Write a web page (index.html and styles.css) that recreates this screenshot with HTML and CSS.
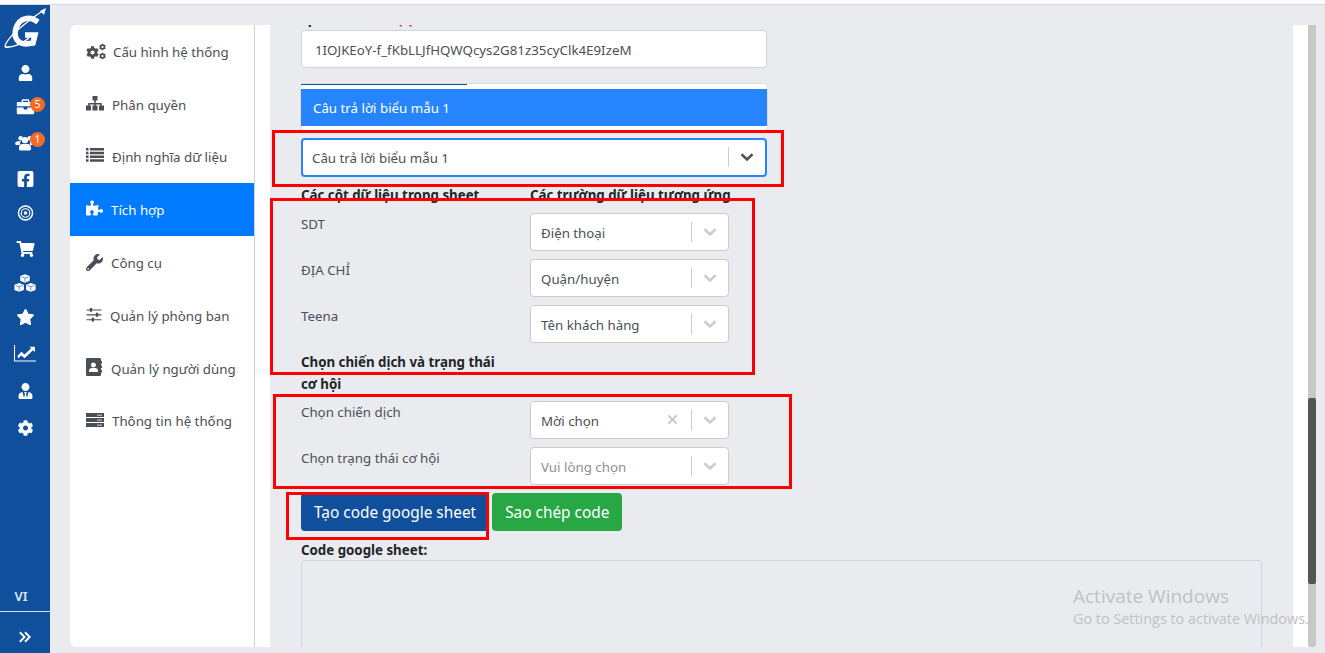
FILE: index.html
```html
<!DOCTYPE html>
<html lang="vi">
<head>
<meta charset="utf-8">
<title>Tích hợp</title>
<link rel="stylesheet" href="styles.css">
</head>
<body>
<svg class="defs" width="0" height="0" aria-hidden="true">
  <symbol id="i-cog" viewBox="0 0 512 512"><path d="M487.4 315.7l-42.6-24.6c4.3-23.2 4.3-47 0-70.2l42.6-24.6c4.9-2.8 7.1-8.6 5.5-14-11.1-35.6-30-67.8-54.7-94.6-3.8-4.1-10-5.1-14.8-2.3L380.8 110c-17.9-15.4-38.5-27.3-60.8-35.1V25.8c0-5.6-3.9-10.5-9.4-11.7-36.7-8.2-74.3-7.8-109.2 0-5.5 1.2-9.4 6.1-9.4 11.7V75c-22.2 7.9-42.8 19.8-60.8 35.1L88.7 85.5c-4.9-2.8-11-1.9-14.8 2.3-24.7 26.7-43.6 58.9-54.7 94.6-1.7 5.4.6 11.2 5.5 14L67.3 221c-4.3 23.2-4.3 47 0 70.2l-42.6 24.6c-4.9 2.8-7.1 8.6-5.5 14 11.1 35.6 30 67.8 54.7 94.6 3.8 4.1 10 5.1 14.8 2.3l42.6-24.6c17.9 15.4 38.5 27.3 60.8 35.1v49.2c0 5.6 3.9 10.5 9.4 11.7 36.7 8.2 74.3 7.8 109.2 0 5.5-1.2 9.4-6.1 9.4-11.7v-49.2c22.2-7.9 42.8-19.8 60.8-35.1l42.6 24.6c4.9 2.8 11 1.9 14.8-2.3 24.7-26.7 43.6-58.9 54.7-94.6 1.5-5.5-.7-11.3-5.6-14.1zM256 336c-44.1 0-80-35.9-80-80s35.9-80 80-80 80 35.9 80 80-35.9 80-80 80z"/></symbol>
  <symbol id="i-user" viewBox="0 0 448 512"><path d="M224 256c70.7 0 128-57.3 128-128S294.7 0 224 0 96 57.3 96 128s57.3 128 128 128zm89.6 32h-16.7c-22.2 10.2-46.9 16-72.9 16s-50.6-5.8-72.9-16h-16.7C60.2 288 0 348.2 0 422.4V464c0 26.5 21.5 48 48 48h352c26.5 0 48-21.5 48-48v-41.6c0-74.2-60.2-134.4-134.4-134.4z"/></symbol>
  <symbol id="i-chev" viewBox="0 0 20 20"><path d="M4.5 7.2 10 12.4l5.5-5.2" fill="none" stroke="currentColor" stroke-width="2.6"/></symbol>
</svg>

<div class="topbar"></div>
<div class="app">
  <nav class="sidebar">
    <svg class="logo" viewBox="0 0 50 48" aria-label="Logo">
      <path d="M38 17C30 11 20 12 16 23c-3 10 2 16 10 16l7-1 2-8H25" fill="none" stroke="#fff" stroke-width="5.500"/>
      <path d="M5 42C5 38 12 30 20 23 28 16 36 10 44 5" fill="none" stroke="#fff" stroke-width="1.300"/>
      <path d="M5 42c7 1 17-3 24-9" fill="none" stroke="#fff" stroke-width="1.600"/>
      <path d="M46 3l-6 3 4 4z" fill="#fff"/>
    </svg>
    <ul class="nav-icons">
      <li class="nav-item"><svg class="nav-svg" viewBox="0 0 448 512"><use href="#i-user"/></svg></li>
      <li class="nav-item"><svg class="nav-svg up1" viewBox="0 0 512 470"><path d="M180 10h152c20 0 36 16 36 36v44h108c20 0 36 16 36 36v84H0v-84c0-20 16-36 36-36h108V46c0-20 16-36 36-36zm4 40v40h144V50zM0 250h200v40c0 9 7 16 16 16h80c9 0 16-7 16-16v-40h200v160c0 20-16 36-36 36H36c-20 0-36-16-36-36z"/></svg><span class="badge">5</span></li>
      <li class="nav-item"><svg class="nav-svg nav-svg-users" viewBox="0 20 640 480"><circle cx="180" cy="110" r="72"/><path d="M90 200h100c-30 40-40 90-34 120H40c-20 0-36-16-36-36 0-50 40-84 86-84z"/><circle cx="470" cy="110" r="72"/><path d="M470 200h80c46 0 86 34 86 84 0 20-16 36-36 36H484c6-30-4-80-14-120z"/><circle cx="320" cy="170" r="100"/><path d="M230 290h180c60 0 100 44 100 100v70c0 20-16 36-36 36H166c-20 0-36-16-36-36v-70c0-56 40-100 100-100z"/></svg><span class="badge">1</span></li>
      <li class="nav-item"><svg class="nav-svg" viewBox="0 30 448 452"><path d="M400 32H48A48 48 0 0 0 0 80v352a48 48 0 0 0 48 48h137.250V327.690h-63V256h63v-54.640c0-62.150 37-96.480 93.670-96.480 27.140 0 55.520 4.840 55.520 4.840v61h-31.270c-30.810 0-40.420 19.120-40.420 38.730V256h68.780l-11 71.690h-57.780V480H400a48 48 0 0 0 48-48V80a48 48 0 0 0-48-48z"/></svg></li>
      <li class="nav-item"><svg class="nav-svg up1" viewBox="0 0 32 32"><circle cx="16" cy="16" r="14" fill="none" stroke="currentColor" stroke-width="3"/><circle cx="16" cy="16" r="8.500" fill="none" stroke="currentColor" stroke-width="2.200"/><circle cx="16" cy="16" r="3.500"/></svg></li>
      <li class="nav-item"><svg class="nav-svg up1" viewBox="0 0 576 512"><path d="M528.120 301.319l47.273-208C578.806 78.301 567.391 64 551.990 64H159.208l-9.166-44.810C147.758 8.021 137.930 0 126.529 0H24C10.745 0 0 10.745 0 24v16c0 13.255 10.745 24 24 24h69.883l70.248 343.435C147.325 417.100 136 435.222 136 456c0 30.928 25.072 56 56 56s56-25.072 56-56c0-15.674-6.447-29.835-16.824-40h209.647C430.447 426.165 424 440.326 424 456c0 30.928 25.072 56 56 56s56-25.072 56-56c0-22.172-12.888-41.332-31.579-50.405l5.517-24.276c3.413-15.018-8.002-29.319-23.403-29.319H218.117l-6.545-32h293.145c11.206 0 20.920-7.754 23.403-18.681z"/></svg></li>
      <li class="nav-item"><svg class="nav-svg nav-svg-big up2" viewBox="20 10 472 395"><path d="M256 16l104 40v104l-104 40-104-40V56z"/><path d="M128 208l104 40v112l-104 40-104-40V248z"/><path d="M384 208l104 40v112l-104 40-104-40V248z"/><path d="M178 70l78 30 78-30M256 100v76M50 260l78 30 78-30M128 290v80M306 260l78 30 78-30M384 290v80" fill="none" stroke="#0f4f9c" stroke-width="13"/></svg></li>
      <li class="nav-item"><svg class="nav-svg up3" viewBox="0 0 576 512"><path d="M259.300 17.800L194 150.200 47.900 171.500c-26.200 3.800-36.700 36.100-17.700 54.600l105.700 103-25 145.500c-4.500 26.300 23.200 46 46.400 33.700L288 439.600l130.700 68.700c23.200 12.200 50.900-7.400 46.400-33.700l-25-145.500 105.700-103c19-18.500 8.500-50.800-17.700-54.600L382 150.200 316.700 17.800c-11.700-23.600-45.600-23.900-57.400 0z"/></svg></li>
      <li class="nav-item"><svg class="nav-svg nav-svg-big up3" viewBox="0 40 512 420"><path d="M512 448H0V64h24v360h488z"/><path d="M80 320l90-100 76 66L400 140l-44-36h130v126l-44-46-196 190-80-66-66 72z"/></svg></li>
      <li class="nav-item"><svg class="nav-svg" viewBox="0 0 448 512"><path d="M224 256c70.700 0 128-57.300 128-128S294.700 0 224 0 96 57.300 96 128s57.300 128 128 128zm95.800 32.600L272 480l-32-136 32-56h-96l32 56-32 136-47.800-191.400C56.900 292 0 350.300 0 422.400V464c0 26.500 21.500 48 48 48h352c26.500 0 48-21.500 48-48v-41.600c0-72.100-56.900-130.400-128.200-133.800z"/></svg></li>
      <li class="nav-item"><svg class="nav-svg down1" viewBox="0 0 512 512"><use href="#i-cog"/></svg></li>
    </ul>
    <div class="lang">VI</div>
    <div class="expand"><svg class="expand-svg" viewBox="0 0 16 14"><path d="M2 1.500 7.500 7 2 12.500M8 1.500 13.500 7 8 12.500" fill="none" stroke="currentColor" stroke-width="2.200"/></svg></div>
  </nav>

  <main class="workspace">
    <div class="panel">
      <ul class="menu">
        <li class="menu-item"><svg class="mi mi-cogs" viewBox="0 0 40 32"><use href="#i-cog" x="0" y="5" width="26" height="26"/><use href="#i-cog" x="26" y="0" width="14" height="14"/><use href="#i-cog" x="26" y="18" width="14" height="14"/></svg>Cấu hình hệ thống</li>
        <li class="menu-item"><svg class="mi mi-site" viewBox="0 0 36 30"><path d="M13 0h10v9h-10zM16.500 9h3v5h12v5h-3v-2h-9v2h-3v-2h-9v2h-3v-5h12zM0 19h10v10H0zM13 19h10v10H13zM26 19h10v10H26z"/></svg>Phân quyền</li>
        <li class="menu-item"><svg class="mi mi-list" viewBox="0 0 36 28"><path d="M0 0h5v5H0zM8 0h28v5H8zM0 7.500h5v5H0zM8 7.500h28v5H8zM0 15h5v5H0zM8 15h28v5H8zM0 22.500h5v5H0zM8 22.500h28v5H8z"/></svg>Định nghĩa dữ liệu</li>
        <li class="menu-item is-active"><svg class="mi mi-puzzle" viewBox="0 0 576 512"><path d="M519.442 288.651c-41.519 0-59.500 31.593-82.058 31.593C377.409 320.244 432 144 432 144s-196.288 80-196.288-3.297c0-35.827 36.288-46.250 36.288-85.985C272 19.216 243.885 0 210.539 0c-34.654 0-66.366 18.891-66.366 56.346 0 41.364 31.711 59.277 31.711 81.750C175.885 207.719 0 166.758 0 166.758v333.237s178.635 41.047 178.635-28.662c0-22.473-40-40.107-40-81.471 0-37.456 29.250-56.346 63.577-56.346 33.673 0 61.788 19.216 61.788 54.717 0 39.735-36.288 50.158-36.288 85.985 0 60.803 129.675 25.730 181.230 25.730 0 0-34.725-120.101 25.827-120.101 35.962 0 46.423 36.152 86.308 36.152C556.712 416 576 387.990 576 354.443c0-34.199-18.962-65.792-56.558-65.792z"/></svg>Tích hợp</li>
        <li class="menu-item"><svg class="mi mi-wrench" viewBox="0 0 512 512"><path d="M507.730 109.100c-2.240-9.030-13.540-12.090-20.120-5.510l-74.360 74.360-67.880-11.310-11.310-67.880 74.360-74.360c6.620-6.620 3.430-17.900-5.660-20.160-47.380-11.740-99.550.91-136.580 37.930-39.640 39.640-50.550 97.100-34.050 147.200L18.740 402.760c-24.990 24.990-24.990 65.510 0 90.500 24.990 24.990 65.510 24.990 90.500 0l213.210-213.210c50.120 16.710 107.470 5.680 147.370-34.220 37.070-37.070 49.700-89.320 37.910-136.730zM64 472c-13.250 0-24-10.750-24-24 0-13.260 10.750-24 24-24s24 10.740 24 24c0 13.250-10.750 24-24 24z"/></svg>Công cụ</li>
        <li class="menu-item"><svg class="mi mi-sliders" viewBox="0 0 32 30"><path d="M0 3h32v2.500H0zM0 13.500h32V16H0zM0 24h32v2.500H0z"/><path d="M7 0h5v8H7zM20 10h5v9h-5zM11 21h5v8h-5z"/></svg>Quản lý phòng ban</li>
        <li class="menu-item"><svg class="mi mi-book" viewBox="0 0 32 36"><path d="M3 0h24c2 0 3 1 3 3v30c0 2-1 3-3 3H3c-2 0-3-1-3-3V3c0-2 1-3 3-3zm12 9a5 5 0 1 0 0 10 5 5 0 0 0 0-10zM6 28h18v-3c0-3-3-5-5-5h-8c-2 0-5 2-5 5z" fill-rule="evenodd"/><path d="M30 6h2v5h-2zM30 15h2v5h-2zM30 24h2v5h-2z"/></svg>Quản lý người dùng</li>
        <li class="menu-item"><svg class="mi mi-server" viewBox="0 0 36 28"><path d="M0 0h36v8H0zM0 10h36v8H0zM0 20h36v8H0z" fill-rule="evenodd"/><path d="M22 3.500h10v1.500H22zM22 13.500h10v1.500H22zM22 23.500h10v1.500H22z" fill="#fff"/></svg>Thông tin hệ thống</li>
      </ul>
      <div class="content-wrap">
        <div class="scroller">
          <label class="cut-label">Spreadsheet ID <span class="req">(*)</span></label>
          <div class="text-input">1IOJKEoY-f_fKbLLJfHQWQcys2G81z35cyClk4E9IzeM</div>
          <div class="sheet-select">
            <div class="sheet-menu">
              <span class="tab-line"></span>
              <div class="sheet-option">Câu trả lời biểu mẫu 1</div>
            </div>
            <div class="select select-focus">
              <span class="select-value">Câu trả lời biểu mẫu 1</span>
              <span class="select-sep"></span>
              <svg class="chev chev-dark"><use href="#i-chev"/></svg>
            </div>
          </div>
          <div class="map-grid">
            <b class="head head-top">Các cột dữ liệu trong sheet</b>
            <b class="head head-top">Các trường dữ liệu tương ứng</b>
            <span class="field-label">SDT</span>
            <div class="select"><span class="select-value">Điện thoại</span><span class="select-sep"></span><svg class="chev"><use href="#i-chev"/></svg></div>
            <span class="field-label">ĐỊA CHỈ</span>
            <div class="select"><span class="select-value">Quận/huyện</span><span class="select-sep"></span><svg class="chev"><use href="#i-chev"/></svg></div>
            <span class="field-label">Teena</span>
            <div class="select"><span class="select-value">Tên khách hàng</span><span class="select-sep"></span><svg class="chev"><use href="#i-chev"/></svg></div>
            <b class="head head-wrap">Chọn chiến dịch và trạng thái cơ hội</b>
            <span></span>
            <span class="field-label">Chọn chiến dịch</span>
            <div class="select"><span class="select-value">Mời chọn</span><svg class="clear" viewBox="0 0 12 12"><path d="M1.500 1.500l9 9M10.500 1.500l-9 9" fill="none" stroke="currentColor" stroke-width="2"/></svg><span class="select-sep"></span><svg class="chev"><use href="#i-chev"/></svg></div>
            <span class="field-label">Chọn trạng thái cơ hội</span>
            <div class="select"><span class="select-value placeholder">Vui lòng chọn</span><span class="select-sep"></span><svg class="chev"><use href="#i-chev"/></svg></div>
          </div>
          <div class="actions">
            <button class="btn btn-primary">Tạo code google sheet</button>
            <button class="btn btn-success">Sao chép code</button>
          </div>
          <b class="code-label">Code google sheet:</b>
          <div class="code-area"></div>
        </div>
      </div>
      <div class="scrollbar"><div class="thumb"></div></div>
    </div>
  </main>
</div>

<div class="mark mark-1"></div>
<div class="mark mark-2"></div>
<div class="mark mark-3"></div>
<div class="mark mark-4"></div>
<div class="activate">
  <div class="activate-title">Activate Windows</div>
  <div class="activate-sub">Go to Settings to activate Windows.</div>
</div>
</body>
</html>
```
FILE: styles.css
```css
* { box-sizing: border-box; }
html, body { margin: 0; height: 100%; }
body {
  background: #e9ebef;
  color: #212529;
  font: 13.300px/21px "Noto Sans", Roboto, sans-serif;
  overflow: hidden;
  position: relative;
}
ul { list-style: none; margin: 0; padding: 0; }
.defs { position: absolute; }

.topbar { height: 5px; background: #fbfbfb; border-bottom: 1px solid #d9d9d9; }
.app { display: flex; height: 648px; }

.sidebar {
  width: 50px;
  background: #0f4f9c;
  color: #fff;
  display: flex;
  flex-direction: column;
  align-items: stretch;
}
.logo { width: 50px; height: 48px; flex: none; fill: #fff; display: block; }
.nav-icons { margin-top: 2px; }
.nav-item {
  position: relative;
  height: 35.400px;
  display: flex;
  align-items: center;
  justify-content: center;
}
.nav-svg { width: 19px; height: 16px; fill: currentColor; display: block; }
.nav-svg-big { width: 22px; height: 18px; }
.nav-svg-users { width: 20px; height: 18px; }
.up1 { margin-bottom: 2px; }
.up2 { margin-bottom: 4px; }
.up3 { margin-bottom: 6px; }
.down1 { margin-top: 2px; }
.badge {
  position: absolute;
  left: 30px;
  top: 6.500px;
  width: 15px;
  height: 15px;
  border-radius: 50%;
  background: #f26a26;
  color: #fff;
  font-size: 10.500px;
  line-height: 15px;
  text-align: center;
}
.lang {
  margin-top: auto;
  height: 25px;
  font-size: 13px;
  font-weight: 600;
  line-height: 21px;
  text-align: center;
  color: #dfe9f6;
  margin-right: 8px;
}
.expand {
  height: 42px;
  padding-top: 8px;
  border-top: 1px solid #d7e2f0;
  display: flex;
  align-items: center;
  justify-content: center;
}
.expand-svg { width: 14px; height: 12px; }

.workspace { flex: 1; min-width: 0; padding: 20px 9px 6px 20px; }
.panel {
  height: 100%;
  display: flex;
  background: #fff;
  border-radius: 6px 0 0 6px;
}
.menu {
  width: 185px;
  flex: none;
  border-right: 1px solid #cfcfcf;
  color: #4a4f55;
}
.menu-item {
  height: 52.800px;
  padding: 2px 0 0 16px;
  display: flex;
  align-items: center;
  line-height: 21px;
}
.menu-item.is-active { background: #007bff; color: #fff; }
.mi { fill: currentColor; margin-right: 7px; flex: none; display: block; }
.mi-cogs { width: 20px; height: 17px; margin-top: -2px; }
.mi-site { width: 18px; height: 15px; margin-right: 8px; margin-top: -4px; }
.mi-list { width: 18px; height: 14px; margin-right: 8px; margin-top: -5px; }
.mi-puzzle { width: 17px; height: 16px; margin-right: 8px; margin-top: -5px; }
.mi-wrench { width: 17px; height: 17px; margin-right: 8px; margin-top: -3px; }
.mi-sliders { width: 16px; height: 14px; margin-right: 8px; margin-top: -3px; }
.mi-book { width: 16px; height: 18px; margin-right: 9px; margin-top: -4px; }
.mi-server { width: 18px; height: 14px; margin-right: 8px; margin-top: -4px; }

.content-wrap { flex: 1; min-width: 0; padding: 0 15px; }
.scroller {
  height: 100%;
  background: #e9ebef;
  overflow: hidden;
  padding: 0 31px;
}
.cut-label { display: block; margin-top: -16px; font-weight: 700; letter-spacing: -.5px; }
.req { color: #e6005c; }
.text-input {
  width: 466px;
  height: 38px;
  background: #fff;
  border: 1px solid #ced4da;
  border-radius: 4px;
  padding: 9px 13px;
  color: #495057;
  margin-bottom: 70px;
}
.sheet-select { position: relative; width: 466px; margin-bottom: 8px; }
.sheet-menu {
  position: absolute;
  left: 0;
  right: 0;
  bottom: 100%;
  margin-bottom: 8px;
  height: 46px;
  padding: 5px 0 4px;
  background: #fff;
  border-radius: 4px;
  box-shadow: 0 0 0 1px rgba(0, 0, 0, .06);
}
.tab-line {
  position: absolute;
  left: 0;
  top: 0;
  width: 166px;
  height: 1px;
  background: #0f4f9c;
}
.sheet-option {
  height: 37px;
  padding: 9px 12px;
  background: #2684ff;
  color: #fff;
}
.select {
  height: 38px;
  background: #fff;
  border: 1px solid #cccccc;
  border-radius: 4px;
  display: flex;
  align-items: center;
  padding: 2px 8px 0 10px;
  color: #495057;
}
.select-focus { height: 39px; border: 2px solid #2684ff; padding-left: 9px; }
.select-value { flex: 1; min-width: 0; white-space: nowrap; }
.placeholder { color: #8a8f94; }
.select-sep { width: 1px; height: 20px; background: #ccc; margin-top: -3px; margin-right: 8px; }
.chev { width: 20px; height: 20px; color: #ccc; margin-top: -3px; }
.chev-dark { color: #555; }
.clear { width: 11px; height: 11px; color: #c4c4c4; margin: -3px 13px 0 0; }

.map-grid {
  display: grid;
  grid-template-columns: 229px 199px;
  row-gap: 8px;
}
.head { display: block; font-weight: 700; padding-right: 30px; white-space: nowrap; }
.head-top { height: 20px; }
.head-wrap { white-space: normal; line-height: 22px; margin-bottom: -2px; }
.field-label { display: block; color: #495057; padding-top: 1px; }
.actions { display: flex; gap: 3px; margin-top: 8px; }
.btn {
  height: 38px;
  padding: 2px 13px 0;
  border: 0;
  border-radius: 4px;
  color: #fff;
  font: 15.400px/24px "Noto Sans", Roboto, sans-serif;
}
.btn-primary { background: #0f4f9c; }
.btn-success { background: #28a745; }
.code-label { display: block; margin-top: 9px; margin-bottom: -1px; font-weight: 700; }
.code-area {
  width: 961px;
  height: 120px;
  background: #e9ecef;
  border: 1px solid #ced4da;
  border-radius: 4px;
}

.scrollbar {
  width: 8px;
  flex: none;
  background: #c8c8c8;
  border-radius: 0 0 2px 2px;
  padding-top: 373px;
}
.thumb { height: 186px; background: #555; border-radius: 2px; }

.mark { position: absolute; border: 3px solid #f00; }
.mark-1 { left: 272px; top: 130px; width: 512px; height: 57px; }
.mark-2 { left: 270px; top: 198px; width: 485px; height: 177px; }
.mark-3 { left: 273px; top: 394px; width: 519px; height: 95px; }
.mark-4 { left: 286px; top: 492px; width: 203px; height: 48px; }

.activate {
  position: absolute;
  left: 1073px;
  top: 584px;
  color: #bfc1c5;
  font-family: "Open Sans", sans-serif;
  white-space: nowrap;
}
.activate-title { font-size: 19px; line-height: 25px; }
.activate-sub { font-size: 14.400px; line-height: 20px; }
```
